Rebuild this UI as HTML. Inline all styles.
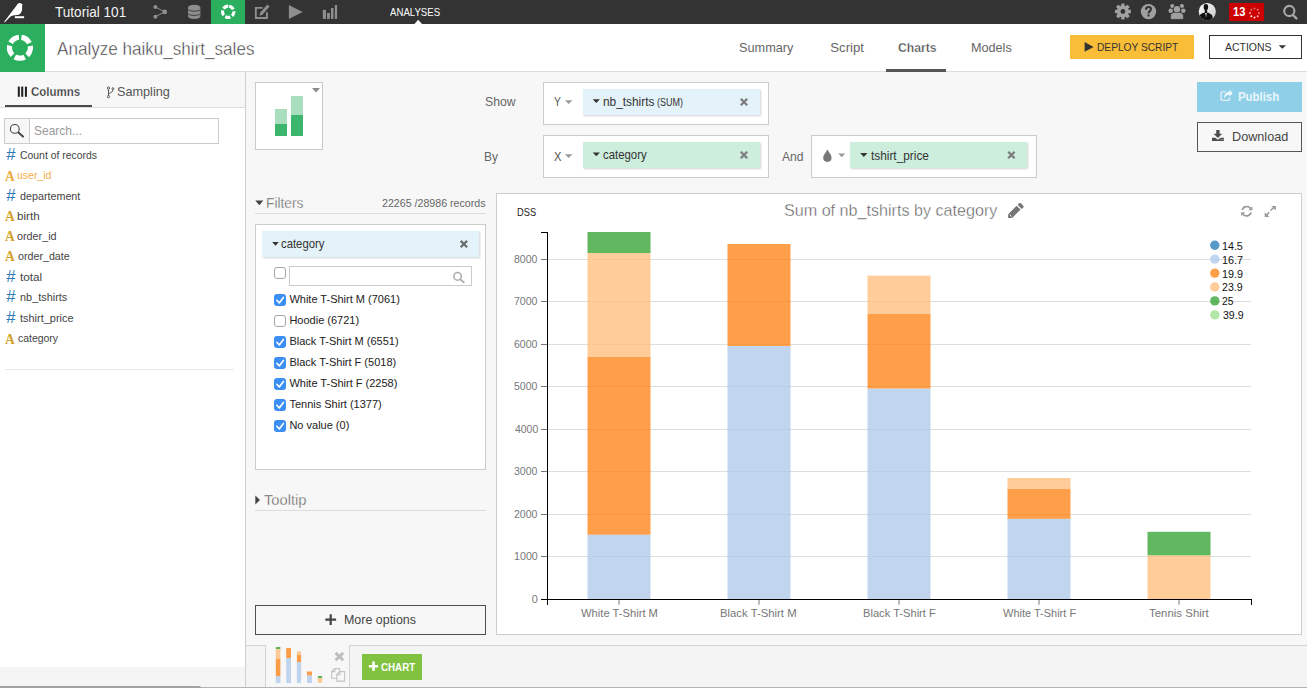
<!DOCTYPE html>
<html><head><meta charset="utf-8"><title>Analyze haiku_shirt_sales</title>
<style>
html,body{margin:0;padding:0;}
html{width:1307px;height:688px;overflow:hidden;}
body{width:1307px;height:688px;position:relative;overflow:hidden;background:#f7f7f7;font-family:"Liberation Sans",sans-serif;}
.a{position:absolute;box-sizing:border-box;}
.t{position:absolute;white-space:nowrap;line-height:20px;height:20px;transform-origin:0 50%;font-family:"Liberation Sans",sans-serif;}
svg{position:absolute;overflow:visible;}
.pill{position:absolute;box-sizing:border-box;box-shadow:1px 1px 2px rgba(0,0,0,0.18);}
.cb{position:absolute;width:12px;height:12px;box-sizing:border-box;border-radius:3px;}
.cb.on{background:#3b8ef3;}
.cb.off{background:#fff;border:1px solid #a5a5a5;}

</style></head>
<body>
<!-- top bar -->
<div class="a" style="left:0;top:0;width:1307px;height:24px;background:#333333;"></div>
<div class="a" style="left:211px;top:0;width:34px;height:24px;background:#2baf5e;"></div>
<!-- header row -->
<div class="a" style="left:0;top:24px;width:1307px;height:47px;background:#fff;"></div>
<div class="a" style="left:0;top:71px;width:1307px;height:1px;background:#dcdcdc;"></div>
<div class="a" style="left:0;top:24px;width:45px;height:47.5px;background:#2baf5e;"></div>
<div class="a" style="left:886px;top:69px;width:60px;height:3px;background:#555;"></div>
<div class="a" style="left:1070px;top:35px;width:124px;height:24px;background:#f9bd38;"></div>
<div class="a" style="left:1209px;top:35px;width:93px;height:24px;background:#fff;border:1px solid #333;"></div>
<!-- left panel -->
<div class="a" style="left:0;top:107px;width:245px;height:559.5px;background:#fff;"></div>
<div class="a" style="left:0;top:107px;width:245px;height:1px;background:#dddddd;"></div>
<div class="a" style="left:245px;top:72px;width:1px;height:616px;background:#cfcfcf;"></div>
<div class="a" style="left:5px;top:105px;width:87px;height:2px;background:#4a4a4a;"></div>
<div class="a" style="left:4px;top:118px;width:215px;height:26px;background:#fff;border:1px solid #ccc;"></div>
<div class="a" style="left:5px;top:119px;width:25px;height:24px;background:#f7f7f7;border-right:1px solid #ccc;"></div>
<div class="a" style="left:5px;top:369px;width:229px;height:1px;background:#e8e8e8;"></div>
<!-- chart type picker -->
<div class="a" style="left:255px;top:82px;width:68px;height:68px;background:#fff;border:1px solid #cacaca;"></div>
<div class="a" style="left:275px;top:109px;width:12px;height:15px;background:#a9dfbf;"></div>
<div class="a" style="left:275px;top:124px;width:12px;height:12px;background:#3cb66d;"></div>
<div class="a" style="left:291px;top:96px;width:12px;height:19px;background:#a9dfbf;"></div>
<div class="a" style="left:291px;top:115px;width:12px;height:21px;background:#3cb66d;"></div>
<svg style="left:312px;top:88px" width="8" height="5" viewBox="0 0 8 5"><path d="M0 0H8L4 4.6Z" fill="#8a8a8a"/></svg>
<!-- show / by boxes -->
<div class="a" style="left:543px;top:82px;width:226px;height:43px;background:#fff;border:1px solid #ccc;"></div>
<div class="a" style="left:543px;top:135px;width:226px;height:43px;background:#fff;border:1px solid #ccc;"></div>
<div class="a" style="left:811px;top:135px;width:226px;height:43px;background:#fff;border:1px solid #ccc;"></div>
<div class="pill" style="left:583px;top:89px;width:176.5px;height:25.5px;background:#e4f2f9;"></div>
<div class="pill" style="left:583px;top:142px;width:176.5px;height:25.5px;background:#cdeedd;"></div>
<div class="pill" style="left:850px;top:142px;width:176.5px;height:25.5px;background:#cdeedd;"></div>
<!-- publish / download -->
<div class="a" style="left:1197px;top:82px;width:105px;height:30px;background:#8fd0e8;"></div>
<div class="a" style="left:1197px;top:122px;width:105px;height:30px;border:1px solid #555;"></div>
<!-- filters -->
<div class="a" style="left:255px;top:213px;width:231px;height:1px;background:#dcdcdc;"></div>
<div class="a" style="left:255px;top:224px;width:231px;height:246px;background:#fff;border:1px solid #ccc;"></div>
<div class="pill" style="left:262px;top:231px;width:217px;height:25.5px;background:#e4f2f9;"></div>
<div class="cb off" style="left:274px;top:267px;"></div>
<div class="a" style="left:289px;top:266px;width:183px;height:20px;background:#fff;border:1px solid #ccc;"></div>
<div class="cb on" style="left:274px;top:294px;"></div>
<div class="cb off" style="left:274px;top:315px;"></div>
<div class="cb on" style="left:274px;top:336px;"></div>
<div class="cb on" style="left:274px;top:357px;"></div>
<div class="cb on" style="left:274px;top:378px;"></div>
<div class="cb on" style="left:274px;top:399px;"></div>
<div class="cb on" style="left:274px;top:420px;"></div>
<div class="a" style="left:255px;top:510px;width:231px;height:1px;background:#dcdcdc;"></div>
<div class="a" style="left:255px;top:605px;width:231px;height:30px;border:1px solid #4f4f4f;"></div>
<!-- bottom bar -->
<div class="a" style="left:246px;top:646px;width:19px;height:41px;background:#f4f4f4;"></div>
<div class="a" style="left:350px;top:646px;width:957px;height:41px;background:#f4f4f4;"></div>
<div class="a" style="left:0;top:666.5px;width:245px;height:21px;background:#f5f5f5;"></div>
<div class="a" style="left:246px;top:645px;width:19px;height:1px;background:#d4d4d4;"></div>
<div class="a" style="left:349px;top:645px;width:958px;height:1px;background:#d4d4d4;"></div>
<div class="a" style="left:265px;top:645px;width:1px;height:43px;background:#d4d4d4;"></div>
<div class="a" style="left:349px;top:645px;width:1px;height:43px;background:#d4d4d4;"></div>
<div class="a" style="left:362px;top:654px;width:60px;height:26px;background:#81c241;"></div>
<!-- bottom scrollbar -->
<div class="a" style="left:0;top:687px;width:1307px;height:1px;background:#b4b4b4;"></div>
<div class="a" style="left:-4px;top:685.5px;width:205px;height:2.5px;background:#a2a2a2;border-radius:2px 2px 0 0;"></div>
<!-- chart panel -->
<div class="a" style="left:496px;top:193px;width:806px;height:442px;background:#fff;border:1px solid #cdcdcd;"></div>
<svg style="left:0;top:0" width="1307" height="688" viewBox="0 0 1307 688" shape-rendering="crispEdges">
<line x1="548" x2="1251" y1="556.5" y2="556.5" stroke="#dedede" stroke-width="1"/>
<line x1="541" x2="547" y1="556.5" y2="556.5" stroke="#777" stroke-width="1"/>
<line x1="548" x2="1251" y1="514.5" y2="514.5" stroke="#dedede" stroke-width="1"/>
<line x1="541" x2="547" y1="514.5" y2="514.5" stroke="#777" stroke-width="1"/>
<line x1="548" x2="1251" y1="471.5" y2="471.5" stroke="#dedede" stroke-width="1"/>
<line x1="541" x2="547" y1="471.5" y2="471.5" stroke="#777" stroke-width="1"/>
<line x1="548" x2="1251" y1="429.5" y2="429.5" stroke="#dedede" stroke-width="1"/>
<line x1="541" x2="547" y1="429.5" y2="429.5" stroke="#777" stroke-width="1"/>
<line x1="548" x2="1251" y1="386.5" y2="386.5" stroke="#dedede" stroke-width="1"/>
<line x1="541" x2="547" y1="386.5" y2="386.5" stroke="#777" stroke-width="1"/>
<line x1="548" x2="1251" y1="344.5" y2="344.5" stroke="#dedede" stroke-width="1"/>
<line x1="541" x2="547" y1="344.5" y2="344.5" stroke="#777" stroke-width="1"/>
<line x1="548" x2="1251" y1="301.5" y2="301.5" stroke="#dedede" stroke-width="1"/>
<line x1="541" x2="547" y1="301.5" y2="301.5" stroke="#777" stroke-width="1"/>
<line x1="548" x2="1251" y1="259.5" y2="259.5" stroke="#dedede" stroke-width="1"/>
<line x1="541" x2="547" y1="259.5" y2="259.5" stroke="#777" stroke-width="1"/>
<g shape-rendering="auto" fill-opacity="0.75">
<rect x="587.5" y="534.7" width="63" height="64.3" fill="#aec7e8"/>
<rect x="587.5" y="357" width="63" height="177.7" fill="#ff7f0e"/>
<rect x="587.5" y="253" width="63" height="104.0" fill="#ffbb78"/>
<rect x="587.5" y="232" width="63" height="21.0" fill="#2ca02c"/>
<rect x="727.5" y="346" width="63" height="253.0" fill="#aec7e8"/>
<rect x="727.5" y="244" width="63" height="102.0" fill="#ff7f0e"/>
<rect x="867.5" y="388.5" width="63" height="210.5" fill="#aec7e8"/>
<rect x="867.5" y="314" width="63" height="74.5" fill="#ff7f0e"/>
<rect x="867.5" y="275.6" width="63" height="38.4" fill="#ffbb78"/>
<rect x="1007.5" y="518.8" width="63" height="80.2" fill="#aec7e8"/>
<rect x="1007.5" y="488.7" width="63" height="30.1" fill="#ff7f0e"/>
<rect x="1007.5" y="478" width="63" height="10.7" fill="#ffbb78"/>
<rect x="1147.5" y="555.3" width="63" height="43.7" fill="#ffbb78"/>
<rect x="1147.5" y="531.8" width="63" height="23.5" fill="#2ca02c"/>
</g>
<path d="M541 232.5H547.5V605" fill="none" stroke="#000" stroke-width="1"/>
<path d="M541 599.5H1251.5V605" fill="none" stroke="#000" stroke-width="1"/>
<rect x="618.3" y="600" width="1.5" height="4.7" fill="#a6a6a6" shape-rendering="auto"/>
<rect x="758.3" y="600" width="1.5" height="4.7" fill="#a6a6a6" shape-rendering="auto"/>
<rect x="898.3" y="600" width="1.5" height="4.7" fill="#a6a6a6" shape-rendering="auto"/>
<rect x="1038.3" y="600" width="1.5" height="4.7" fill="#a6a6a6" shape-rendering="auto"/>
<rect x="1178.3" y="600" width="1.5" height="4.7" fill="#a6a6a6" shape-rendering="auto"/>
<g shape-rendering="auto" fill-opacity="0.75">
<circle cx="1214.8" cy="245.2" r="4.7" fill="#1f77b4"/>
<circle cx="1214.8" cy="259.1" r="4.7" fill="#aec7e8"/>
<circle cx="1214.8" cy="273.1" r="4.7" fill="#ff7f0e"/>
<circle cx="1214.8" cy="287" r="4.7" fill="#ffbb78"/>
<circle cx="1214.8" cy="300.9" r="4.7" fill="#2ca02c"/>
<circle cx="1214.8" cy="314.9" r="4.7" fill="#98df8a"/>
</g>
<g shape-rendering="auto" fill-opacity="0.75">
<rect x="275.8" y="647" width="4.6" height="2.0" fill="#2ca02c"/>
<rect x="275.8" y="649" width="4.6" height="10.0" fill="#ffbb78"/>
<rect x="275.8" y="659" width="4.6" height="17.0" fill="#ff7f0e"/>
<rect x="275.8" y="676" width="4.6" height="7.0" fill="#aec7e8"/>
<rect x="286.2" y="648" width="4.8" height="10.0" fill="#ff7f0e"/>
<rect x="286.2" y="658" width="4.8" height="25.0" fill="#aec7e8"/>
<rect x="296.9" y="651.3" width="4.2" height="3.7" fill="#ffbb78"/>
<rect x="296.9" y="655" width="4.2" height="7.0" fill="#ff7f0e"/>
<rect x="296.9" y="662" width="4.2" height="21.0" fill="#aec7e8"/>
<rect x="307" y="671" width="5" height="1.0" fill="#ffbb78"/>
<rect x="307" y="672" width="5" height="3.5" fill="#ff7f0e"/>
<rect x="307" y="675.5" width="5" height="7.5" fill="#aec7e8"/>
<rect x="317.8" y="676" width="4.4" height="2.0" fill="#2ca02c"/>
<rect x="317.8" y="678" width="4.4" height="5.0" fill="#ffbb78"/>
</g>
</svg>
<!-- icons -->
<svg style="left:0;top:0" width="1307" height="688" viewBox="0 0 1307 688">
<path d="M4 21.9L16.4 5.7C17.2 4 18.3 2.9 19.5 2.9C20.5 2.9 21.4 3.5 22.8 4.4L22 5.5C22.3 8 22.2 10 21.7 11.3C21 13.2 20 14.3 18.5 14.8C17.4 15.2 16 15.2 14 15.2L10.8 16.2L4.8 22.3Z" fill="#fff"/>
<rect x="14.9" y="16.2" width="9.2" height="2" fill="#fff"/>
<g stroke="#8e8e8e" stroke-width="1" fill="#8e8e8e"><line x1="155.4" y1="7" x2="164.7" y2="11.9"/><line x1="155.4" y1="16.7" x2="164.7" y2="11.9"/><circle cx="155.4" cy="7" r="2" stroke="none"/><circle cx="155.4" cy="16.7" r="2" stroke="none"/><circle cx="164.7" cy="11.9" r="2.4" stroke="none"/></g>
<path d="M188 7.6A6.2 2.9 0 0 1 200.4 7.6V16.3A6.2 2.8 0 0 1 188 16.3Z" fill="#8e8e8e"/>
<path d="M188 9.3A6.2 1.9 0 0 0 200.4 9.3M188 13.5A6.2 1.9 0 0 0 200.4 13.5" fill="none" stroke="#333" stroke-width="0.9"/>
<circle cx="228.2" cy="11.8" r="5.65" fill="none" stroke="#fff" stroke-width="3.1" stroke-dasharray="5.200 1.900" transform="rotate(-80.37 228.2 11.8)"/>
<circle cx="19.95" cy="47.7" r="10.5" fill="none" stroke="#fff" stroke-width="5.2" stroke-dasharray="10.195 3.000" transform="rotate(-81.81 19.95 47.7)"/>
<path d="M266.95 12.2V17.95H255.85V7.85H262.6" fill="none" stroke="#8e8e8e" stroke-width="1.9"/>
<path d="M259.5 15.8L260.1 12.7L267.3 4.6L269.6 6.6L262.4 14.8Z" fill="#8e8e8e" stroke="#333" stroke-width="1.5" stroke-linejoin="round"/>
<path d="M259.5 15.8L260.1 12.7L267.3 4.6L269.6 6.6L262.4 14.8Z" fill="#8e8e8e"/>
<path d="M288.9 5L302.7 12L288.9 19Z" fill="#8e8e8e"/>
<rect x="322.8" y="9.9" width="3.2" height="9.0" fill="#8e8e8e"/>
<rect x="327" y="13" width="2.9" height="5.9" fill="#8e8e8e"/>
<rect x="331" y="8" width="2.5" height="10.9" fill="#8e8e8e"/>
<rect x="334.8" y="5" width="2.3" height="13.9" fill="#8e8e8e"/>
<path d="M414.4 24L418.2 19.8L422 24Z" fill="#fff"/>
<g fill="#a0a0a0"><rect x="1121.2" y="3.5" width="3.4" height="16" rx="0.6" transform="rotate(0 1122.9 11.5)"/><rect x="1121.2" y="3.5" width="3.4" height="16" rx="0.6" transform="rotate(45 1122.9 11.5)"/><rect x="1121.2" y="3.5" width="3.4" height="16" rx="0.6" transform="rotate(90 1122.9 11.5)"/><rect x="1121.2" y="3.5" width="3.4" height="16" rx="0.6" transform="rotate(135 1122.9 11.5)"/><circle cx="1122.9" cy="11.5" r="6"/></g><circle cx="1122.9" cy="11.5" r="2.4" fill="#333"/>
<circle cx="1148.5" cy="11.6" r="7.7" fill="#a0a0a0"/><path d="M1146 9.7C1146 7.8 1147 7 1148.5 7C1150 7 1151 7.9 1151 9.3C1151 11.1 1148.5 11.2 1148.5 13.4" fill="none" stroke="#333" stroke-width="2"/><circle cx="1148.5" cy="15.5" r="1.15" fill="#333"/>
<g fill="#a0a0a0"><circle cx="1172.3" cy="6" r="2.1"/><circle cx="1181.9" cy="6" r="2.1"/><circle cx="1170.7" cy="10.7" r="2.3"/><circle cx="1183.3" cy="10.7" r="2.3"/></g>
<circle cx="1177" cy="9.2" r="3.9" fill="#333"/><circle cx="1177" cy="9.2" r="3.2" fill="#a0a0a0"/>
<path d="M1170.6 19.3V16C1170.6 13.6 1172.6 12.4 1174.6 12.4H1179.4C1181.4 12.4 1183.4 13.6 1183.4 16V19.3Z" fill="#a0a0a0" stroke="#333" stroke-width="0.5"/>
<defs><linearGradient id="av" x1="0" y1="0" x2="1" y2="1"><stop offset="0" stop-color="#ffffff"/><stop offset="1" stop-color="#c4c4c4"/></linearGradient><clipPath id="avc"><circle cx="1207.3" cy="11.6" r="8.6"/></clipPath></defs>
<circle cx="1207.3" cy="11.6" r="8.6" fill="url(#av)"/>
<g clip-path="url(#avc)" fill="#111"><ellipse cx="1205.9" cy="7" rx="2.3" ry="3.1"/><rect x="1204.8" y="9" width="2.3" height="4"/><path d="M1199.5 21V16.5C1199.5 14.5 1201 13.6 1204.6 12.4L1206 14L1207.3 12.4C1210 13.2 1212.6 14.5 1212.6 17V21Z"/></g>
<path d="M1205.3 13L1206 17.8L1206.8 13Z" fill="#ddd"/>
<rect x="1229" y="3" width="35" height="18" fill="#cc0000"/>
<circle cx="1259.00" cy="13.00" r="0.95" fill="#fff" fill-opacity="0.55"/>
<circle cx="1257.68" cy="16.18" r="0.95" fill="#fff" fill-opacity="0.75"/>
<circle cx="1254.50" cy="17.50" r="0.95" fill="#fff" fill-opacity="0.95"/>
<circle cx="1251.32" cy="16.18" r="0.95" fill="#fff" fill-opacity="1"/>
<circle cx="1250.00" cy="13.00" r="0.95" fill="#fff" fill-opacity="0.7"/>
<circle cx="1251.32" cy="9.82" r="0.95" fill="#fff" fill-opacity="0.5"/>
<circle cx="1254.50" cy="8.50" r="0.95" fill="#fff" fill-opacity="0.45"/>
<circle cx="1257.68" cy="9.82" r="0.95" fill="#fff" fill-opacity="0.5"/>
<circle cx="1289.3" cy="11" r="5.1" fill="none" stroke="#a8a8a8" stroke-width="2.1"/><line x1="1292.9" y1="15" x2="1296.4" y2="18.4" stroke="#a8a8a8" stroke-width="2.4" stroke-linecap="round"/>
<path d="M1084.6 42L1093.6 46.9L1084.6 51.8Z" fill="#333"/>
<path d="M1278.7 45.2H1286L1282.35 48.8Z" fill="#333"/>
<rect x="17.8" y="86.6" width="2.05" height="10.2" fill="#222"/>
<rect x="21.2" y="86.6" width="2.05" height="10.2" fill="#222"/>
<rect x="24.9" y="86.6" width="2.05" height="10.2" fill="#222"/>
<g fill="none" stroke="#555" stroke-width="1"><circle cx="108.5" cy="88.1" r="1.15"/><circle cx="108.5" cy="96.6" r="1.15"/><circle cx="112.9" cy="88.6" r="0.9"/><path d="M108.5 89.3V95.4M108.5 93.6C111.6 92.8 112.8 91.6 112.9 89.6"/></g>
<circle cx="14.8" cy="128.9" r="4.4" fill="none" stroke="#444" stroke-width="1.1"/><line x1="18.4" y1="132.6" x2="23" y2="136.6" stroke="#444" stroke-width="2" stroke-linecap="round"/>
<path d="M565 100.2H572.4L568.7 104.0Z" fill="#999"/>
<path d="M565 154.2H572.4L568.7 158.0Z" fill="#999"/>
<path d="M838.2 153.4H845.2L841.7 157.20000000000002Z" fill="#999"/>
<path d="M592.7 99.2H599.9000000000001L596.3000000000001 103.10000000000001Z" fill="#333"/>
<path d="M592.7 152.4H599.9000000000001L596.3000000000001 156.3Z" fill="#333"/>
<path d="M860.2 153H867.4000000000001L863.8000000000001 156.9Z" fill="#333"/>
<path d="M272.2 242H278.8L275.5 245.7Z" fill="#333"/>
<path d="M255.3 200.6H263.3L259.3 205.2Z" fill="#444"/>
<path d="M255.3 495.4V504.4L260 499.9Z" fill="#444"/>
<path d="M740.8 98.8L747.2 105.2M747.2 98.8L740.8 105.2" stroke="#7d7d7d" stroke-width="2.3" fill="none"/>
<path d="M740.8 151.8L747.2 158.2M747.2 151.8L740.8 158.2" stroke="#7d7d7d" stroke-width="2.3" fill="none"/>
<path d="M1008.1999999999999 151.8L1014.6 158.2M1014.6 151.8L1008.1999999999999 158.2" stroke="#7d7d7d" stroke-width="2.3" fill="none"/>
<path d="M460.7 240.9L467.09999999999997 247.29999999999998M467.09999999999997 240.9L460.7 247.29999999999998" stroke="#6d6d6d" stroke-width="2.3" fill="none"/>
<path d="M335.6 652.9L343.2 660.3M343.2 652.9L335.6 660.3" stroke="#bdbdbd" stroke-width="2.9" fill="none"/>
<path d="M827.4 149.6C829 152.5 831.6 155.3 831.6 157.8A4.2 4.1 0 0 1 823.2 157.8C823.2 155.3 825.8 152.5 827.4 149.6Z" fill="#777"/>
<path d="M1229.6 97.4V98.6C1229.6 99.7 1228.8 100.4 1227.8 100.4H1222.9C1221.8 100.4 1221.1 99.7 1221.1 98.6V93.4C1221.1 92.3 1221.8 91.6 1222.9 91.6H1225.2" fill="none" stroke="#e2f2f9" stroke-width="1.4"/>
<path d="M1229.4 89.6L1232.7 93.2L1229.4 96.8V94.7C1227 94.7 1225.3 95.7 1224.2 98.8C1223.7 94.5 1225.8 91.9 1229.4 91.7Z" fill="#eef8fc"/>
<path d="M1216.2 130H1219.6V133.7H1222.2L1217.9 138L1213.6 133.7H1216.2Z" fill="#4d4d4d"/>
<path d="M1212 137.7H1215.2L1217.9 139.7L1220.6 137.7H1223.8V141H1212Z" fill="#4d4d4d"/><circle cx="1220.9" cy="139.7" r="0.45" fill="#f7f7f7"/><circle cx="1222.4" cy="139.7" r="0.45" fill="#f7f7f7"/>
<circle cx="457.6" cy="276.4" r="3.8" fill="none" stroke="#aaa" stroke-width="1.5"/><line x1="460.4" y1="279.4" x2="463.8" y2="282.4" stroke="#aaa" stroke-width="1.8" stroke-linecap="round"/>
<path d="M276.8 300.3L279.3 302.9L283.4 297.4" fill="none" stroke="#fff" stroke-width="1.6" stroke-linecap="round" stroke-linejoin="round"/>
<path d="M276.8 342.3L279.3 344.9L283.4 339.4" fill="none" stroke="#fff" stroke-width="1.6" stroke-linecap="round" stroke-linejoin="round"/>
<path d="M276.8 363.3L279.3 365.9L283.4 360.4" fill="none" stroke="#fff" stroke-width="1.6" stroke-linecap="round" stroke-linejoin="round"/>
<path d="M276.8 384.3L279.3 386.9L283.4 381.4" fill="none" stroke="#fff" stroke-width="1.6" stroke-linecap="round" stroke-linejoin="round"/>
<path d="M276.8 405.3L279.3 407.9L283.4 402.4" fill="none" stroke="#fff" stroke-width="1.6" stroke-linecap="round" stroke-linejoin="round"/>
<path d="M276.8 426.3L279.3 428.9L283.4 423.4" fill="none" stroke="#fff" stroke-width="1.6" stroke-linecap="round" stroke-linejoin="round"/>
<path d="M330.7 614.3V624.9M325.3 619.6H336.1" stroke="#444" stroke-width="2.2" fill="none"/>
<path d="M373.5 661.6V670.8M368.9 666.2H378.1" stroke="#fff" stroke-width="2.6" fill="none"/>
<g fill="#f7f7f7" stroke="#c4c4c4" stroke-width="1.1"><path d="M331.7 671.4L334.6 668.6H339.6V678.3H331.7Z"/><path d="M331.9 671.6H334.8V668.8" fill="none"/><path d="M336.7 674.4L339.6 671.6H344.6V681.1H336.7Z"/><path d="M336.9 674.6H339.8V671.8" fill="none"/></g>
<path d="M1008.1 217.9V214.3L1016.6 205.8L1020.5 209.4L1012.2 217.9Z" fill="#757575"/><path d="M1017.6 204.8L1019 203.3C1019.5 202.8 1020.3 202.8 1020.8 203.3L1023.3 205.7C1023.8 206.2 1023.8 207 1023.3 207.5L1021.7 209Z" fill="#757575"/><path d="M1009.6 214.6L1011.6 216.6" stroke="#fff" stroke-width="0.9"/>
<g fill="none" stroke="#9a9a9a" stroke-width="1.7"><path d="M1242.26 210A4.6 4.6 0 0 1 1250.5 208.5"/><path d="M1251.14 212.4A4.6 4.6 0 0 1 1242.9 213.9"/></g><path d="M1252.3 206.2V210.2H1248.3Z" fill="#9a9a9a"/><path d="M1241.1 216.2V212.2H1245.1Z" fill="#9a9a9a"/>
<g stroke="#9a9a9a" stroke-width="1.5" fill="#9a9a9a"><line x1="1266.3" y1="215.4" x2="1269.3" y2="212.4"/><line x1="1270.3" y1="210.5" x2="1274.4" y2="207.4"/><path d="M1271.2 205.9H1275.9V210.6Z" stroke="none"/><path d="M1264.7 212.3V217H1269.4Z" stroke="none"/></g>
</svg>

<span class="t" style="left:54.93px;top:1.63px;font-size:15.2px;color:#f2f2f2;transform:scaleX(0.8940);">Tutorial 101</span>
<span class="t" style="left:390.30px;top:1.92px;font-size:11.2px;color:#ffffff;transform:scaleX(0.8610);">ANALYSES</span>
<span class="t" style="left:1233.02px;top:1.63px;font-size:13.2px;color:#ffffff;font-weight:bold;transform:scaleX(0.8481);">13</span>
<span class="t" style="left:56.90px;top:38.53px;font-size:18.1px;color:#333;transform:scaleX(0.9438);-webkit-text-stroke:0.45px #fff;">Analyze haiku_shirt_sales</span>
<span class="t" style="left:738.52px;top:37.63px;font-size:13.2px;color:#666;transform:scaleX(0.9647);">Summary</span>
<span class="t" style="left:830.30px;top:37.63px;font-size:13.2px;color:#666;">Script</span>
<span class="t" style="left:898.24px;top:37.63px;font-size:13.2px;color:#555;font-weight:bold;transform:scaleX(0.9198);-webkit-text-stroke:0.25px #fff;">Charts</span>
<span class="t" style="left:970.54px;top:37.63px;font-size:13.2px;color:#666;transform:scaleX(0.9574);">Models</span>
<span class="t" style="left:1096.61px;top:36.78px;font-size:11.6px;color:#333;transform:scaleX(0.8786);">DEPLOY SCRIPT</span>
<span class="t" style="left:1224.80px;top:36.78px;font-size:11.6px;color:#333;transform:scaleX(0.9037);">ACTIONS</span>
<span class="t" style="left:30.95px;top:81.60px;font-size:12.7px;color:#333;font-weight:bold;transform:scaleX(0.9070);-webkit-text-stroke:0.25px #f7f7f7;">Columns</span>
<span class="t" style="left:116.82px;top:81.76px;font-size:13.1px;color:#555;transform:scaleX(0.9676);">Sampling</span>
<span class="t" style="left:33.94px;top:120.81px;font-size:13.1px;color:#999;transform:scaleX(0.9156);">Search...</span>
<span class="t" style="left:20.01px;top:145.03px;font-size:10.6px;color:#444;transform:scaleX(0.9824);">Count of records</span>
<span class="t" style="left:6.10px;top:143.79px;font-size:16.2px;color:#2f79b3;transform:scaleX(1.0333);font-style:italic;">#</span>
<span class="t" style="left:17.30px;top:165.23px;font-size:10.6px;color:#f6ad4b;transform:scaleX(0.9919);">user_id</span>
<span class="t" style="left:5.20px;top:166.52px;font-size:13.8px;color:#e8ac3a;font-weight:bold;font-family:'Liberation Serif',serif;transform:scaleX(0.9796);">A</span>
<span class="t" style="left:20.39px;top:185.93px;font-size:10.6px;color:#444;transform:scaleX(1.0140);">departement</span>
<span class="t" style="left:6.10px;top:184.69px;font-size:16.2px;color:#2f79b3;transform:scaleX(1.0333);font-style:italic;">#</span>
<span class="t" style="left:17.24px;top:205.83px;font-size:10.6px;color:#444;transform:scaleX(1.0965);">birth</span>
<span class="t" style="left:5.20px;top:207.12px;font-size:13.8px;color:#d3a127;font-weight:bold;font-family:'Liberation Serif',serif;transform:scaleX(0.9796);">A</span>
<span class="t" style="left:17.49px;top:225.93px;font-size:10.6px;color:#444;transform:scaleX(1.0186);">order_id</span>
<span class="t" style="left:5.20px;top:227.22px;font-size:13.8px;color:#d3a127;font-weight:bold;font-family:'Liberation Serif',serif;transform:scaleX(0.9796);">A</span>
<span class="t" style="left:17.50px;top:246.03px;font-size:10.6px;color:#444;transform:scaleX(1.0084);">order_date</span>
<span class="t" style="left:5.20px;top:247.32px;font-size:13.8px;color:#d3a127;font-weight:bold;font-family:'Liberation Serif',serif;transform:scaleX(0.9796);">A</span>
<span class="t" style="left:20.39px;top:266.83px;font-size:10.6px;color:#444;transform:scaleX(1.1099);">total</span>
<span class="t" style="left:6.10px;top:265.59px;font-size:16.2px;color:#2f79b3;transform:scaleX(1.0333);font-style:italic;">#</span>
<span class="t" style="left:19.78px;top:287.23px;font-size:10.6px;color:#444;transform:scaleX(1.0299);">nb_tshirts</span>
<span class="t" style="left:6.10px;top:285.99px;font-size:16.2px;color:#2f79b3;transform:scaleX(1.0333);font-style:italic;">#</span>
<span class="t" style="left:20.40px;top:308.33px;font-size:10.6px;color:#444;transform:scaleX(1.0342);">tshirt_price</span>
<span class="t" style="left:6.10px;top:307.09px;font-size:16.2px;color:#2f79b3;transform:scaleX(1.0333);font-style:italic;">#</span>
<span class="t" style="left:17.51px;top:328.23px;font-size:10.6px;color:#444;transform:scaleX(0.9862);">category</span>
<span class="t" style="left:5.20px;top:329.52px;font-size:13.8px;color:#d3a127;font-weight:bold;font-family:'Liberation Serif',serif;transform:scaleX(0.9796);">A</span>
<span class="t" style="left:484.84px;top:91.53px;font-size:13.2px;color:#666;transform:scaleX(0.9265);">Show</span>
<span class="t" style="left:484.49px;top:146.53px;font-size:13.2px;color:#666;transform:scaleX(0.9095);">By</span>
<span class="t" style="left:781.80px;top:146.53px;font-size:13.2px;color:#666;transform:scaleX(0.9185);">And</span>
<span class="t" style="left:554.04px;top:91.53px;font-size:13.2px;color:#555;transform:scaleX(0.7857);">Y</span>
<span class="t" style="left:554.03px;top:146.53px;font-size:13.2px;color:#555;transform:scaleX(0.8452);">X</span>
<span class="t" style="left:603.22px;top:91.87px;font-size:12.2px;color:#333;transform:scaleX(0.9731);">nb_tshirts</span>
<span class="t" style="left:656.86px;top:92.63px;font-size:10px;color:#333;transform:scaleX(0.8972);">(SUM)</span>
<span class="t" style="left:603.03px;top:144.77px;font-size:12.2px;color:#333;transform:scaleX(0.9332);">category</span>
<span class="t" style="left:871.00px;top:145.87px;font-size:12.2px;color:#333;transform:scaleX(0.9716);">tshirt_price</span>
<span class="t" style="left:1237.90px;top:86.60px;font-size:13px;color:#eaf6fb;font-weight:bold;transform:scaleX(0.8765);">Publish</span>
<span class="t" style="left:1231.73px;top:126.60px;font-size:13px;color:#444;transform:scaleX(0.9735);">Download</span>
<span class="t" style="left:266.12px;top:192.65px;font-size:14px;color:#555;transform:scaleX(0.9805);-webkit-text-stroke:0.35px #f7f7f7;">Filters</span>
<span class="t" style="left:382.40px;top:193.43px;font-size:10.6px;color:#666;transform:scaleX(1.0046);">22265 /28986 records</span>
<span class="t" style="left:281.14px;top:233.67px;font-size:12.2px;color:#333;transform:scaleX(0.9289);">category</span>
<span class="t" style="left:289.40px;top:289.29px;font-size:11px;color:#222;">White T-Shirt M (7061)</span>
<span class="t" style="left:289.40px;top:310.19px;font-size:11px;color:#222;">Hoodie (6721)</span>
<span class="t" style="left:289.40px;top:331.09px;font-size:11px;color:#222;">Black T-Shirt M (6551)</span>
<span class="t" style="left:289.40px;top:351.99px;font-size:11px;color:#222;">Black T-Shirt F (5018)</span>
<span class="t" style="left:289.40px;top:372.89px;font-size:11px;color:#222;">White T-Shirt F (2258)</span>
<span class="t" style="left:289.40px;top:393.79px;font-size:11px;color:#222;">Tennis Shirt (1377)</span>
<span class="t" style="left:289.40px;top:414.69px;font-size:11px;color:#222;">No value (0)</span>
<span class="t" style="left:263.98px;top:490.15px;font-size:14px;color:#555;transform:scaleX(1.0510);-webkit-text-stroke:0.35px #f7f7f7;">Tooltip</span>
<span class="t" style="left:343.51px;top:609.73px;font-size:12.6px;color:#444;transform:scaleX(0.9883);">More options</span>
<span class="t" style="left:380.57px;top:657.11px;font-size:11.8px;color:#ffffff;font-weight:bold;transform:scaleX(0.8287);">CHART</span>
<span class="t" style="left:516.57px;top:202.57px;font-size:10.2px;color:#222;transform:scaleX(0.9105);">DSS</span>
<span class="t" style="left:783.81px;top:200.22px;font-size:16.4px;color:#585858;transform:scaleX(0.9841);-webkit-text-stroke:0.4px #fff;">Sum of nb_tshirts by category</span>
<span class="t" style="left:531.70px;top:589.26px;font-size:10.8px;color:#777;">0</span>
<span class="t" style="left:513.91px;top:546.26px;font-size:10.8px;color:#777;transform:scaleX(0.9904);">1000</span>
<span class="t" style="left:514.21px;top:504.26px;font-size:10.8px;color:#777;transform:scaleX(0.9775);">2000</span>
<span class="t" style="left:514.31px;top:461.26px;font-size:10.8px;color:#777;transform:scaleX(0.9733);">3000</span>
<span class="t" style="left:514.51px;top:419.26px;font-size:10.8px;color:#777;transform:scaleX(0.9650);">4000</span>
<span class="t" style="left:514.31px;top:376.26px;font-size:10.8px;color:#777;transform:scaleX(0.9733);">5000</span>
<span class="t" style="left:514.21px;top:334.26px;font-size:10.8px;color:#777;transform:scaleX(0.9775);">6000</span>
<span class="t" style="left:514.21px;top:291.26px;font-size:10.8px;color:#777;transform:scaleX(0.9775);">7000</span>
<span class="t" style="left:514.31px;top:249.26px;font-size:10.8px;color:#777;transform:scaleX(0.9733);">8000</span>
<span class="t" style="left:580.80px;top:603.02px;font-size:10.9px;color:#777;transform:scaleX(1.0281);">White T-Shirt M</span>
<span class="t" style="left:720.47px;top:603.02px;font-size:10.9px;color:#777;transform:scaleX(1.0400);">Black T-Shirt M</span>
<span class="t" style="left:862.58px;top:603.02px;font-size:10.9px;color:#777;transform:scaleX(1.0226);">Black T-Shirt F</span>
<span class="t" style="left:1002.60px;top:603.02px;font-size:10.9px;color:#777;transform:scaleX(1.0094);">White T-Shirt F</span>
<span class="t" style="left:1149.19px;top:603.02px;font-size:10.9px;color:#777;transform:scaleX(1.0508);">Tennis Shirt</span>
<span class="t" style="left:1222.11px;top:235.66px;font-size:10.8px;color:#111;transform:scaleX(0.9892);">14.5</span>
<span class="t" style="left:1222.10px;top:249.56px;font-size:10.8px;color:#111;transform:scaleX(0.9942);">16.7</span>
<span class="t" style="left:1222.10px;top:263.56px;font-size:10.8px;color:#111;transform:scaleX(0.9942);">19.9</span>
<span class="t" style="left:1222.41px;top:277.46px;font-size:10.8px;color:#111;transform:scaleX(0.9793);">23.9</span>
<span class="t" style="left:1222.42px;top:291.36px;font-size:10.8px;color:#111;transform:scaleX(0.9544);">25</span>
<span class="t" style="left:1222.51px;top:305.36px;font-size:10.8px;color:#111;transform:scaleX(0.9745);">39.9</span>
</body></html>
